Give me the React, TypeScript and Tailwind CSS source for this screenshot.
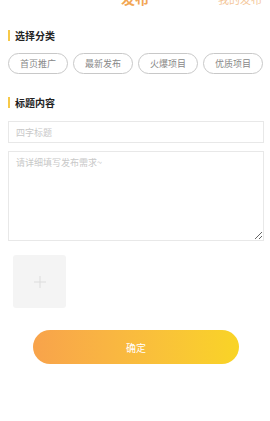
import { useState } from "react";

const categories = ["首页推广", "最新发布", "火爆项目", "优质项目"];

function SectionTitle({ text }: { text: string }) {
  return (
    <div className="flex items-center gap-[5px] px-[8px]">
      <span className="w-[2px] h-[11px] bg-[#f7c948]" />
      <span className="text-[10px] font-bold text-[#222] leading-none">{text}</span>
    </div>
  );
}

export default function App() {
  const [active, setActive] = useState<number | null>(null);
  return (
    <div
      className="w-[270px] h-[421px] bg-white overflow-hidden"
      style={{ fontFamily: '"Noto Sans CJK SC", "Noto Sans", sans-serif' }}
    >
      <header className="relative h-[24px] -mt-[14px] flex items-center justify-center">
        <span className="text-[14px] font-bold text-[#f2a653] leading-none">发布</span>
        <span className="absolute right-[8px] top-[8px] text-[11px] text-[#f4c79a] leading-none">我的发布</span>
      </header>

      <div className="pt-[20px]">
        <SectionTitle text="选择分类" />
        <div className="flex gap-[5px] pl-[8px] pr-[6px] mt-[12px]">
          {categories.map((c, i) => (
            <button
              key={c}
              onClick={() => setActive(i)}
              className={
                "w-[60px] h-[21px] rounded-full border text-[9px] leading-none " +
                (active === i ? "border-[#f2a653] text-[#f2a653]" : "border-[#c8c8c8] text-[#888]")
              }
            >
              {c}
            </button>
          ))}
        </div>
      </div>

      <div className="mt-[23px]">
        <SectionTitle text="标题内容" />
        <div className="pl-[8px] pr-[6px] mt-[13px] flex flex-col gap-[8px]">
          <input
            placeholder="四字标题"
            className="w-full h-[22px] border border-[#e8e8e8] px-[7px] text-[9px] outline-none placeholder:text-[#c8c8c8]"
          />
          <textarea
            placeholder="请详细填写发布需求~"
            className="w-full h-[90px] border border-[#e8e8e8] px-[7px] py-[4px] text-[9px] outline-none placeholder:text-[#c8c8c8]"
          />
        </div>
      </div>

      <div className="px-[13px] mt-[14px]">
        <div className="w-[53px] h-[53px] rounded-[3px] bg-[#f4f4f4] flex items-center justify-center">
          <svg width="12" height="12" viewBox="0 0 12 12">
            <path d="M6 0v12M0 6h12" stroke="#dcdcdc" strokeWidth="1" />
          </svg>
        </div>
      </div>

      <div className="flex justify-center mt-[22px]">
        <button className="w-[206px] h-[34px] ml-[2px] rounded-full bg-gradient-to-r from-[#f8a34b] to-[#f9d425] text-white text-[10px]">
          确定
        </button>
      </div>
    </div>
  );
}
